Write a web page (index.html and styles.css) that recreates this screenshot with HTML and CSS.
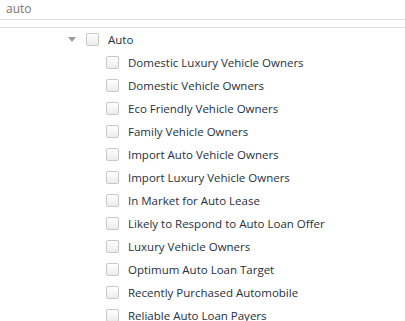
FILE: index.html
```html
<!DOCTYPE html>
<html lang="en">
<head>
    <meta charset="UTF-8" />
    <title>Segments</title>
    <link rel="stylesheet" href="styles.css">
</head>
<body>
<div class="search">
    <span class="query">auto</span>
</div>
<div class="tree">
    <div class="node parent">
        <span class="toggle"></span>
        <span class="check"></span>
        <span class="label">Auto</span>
    </div>
    <ul class="children">
        <li class="node"><span class="check"></span><span class="label">Domestic Luxury Vehicle Owners</span></li>
        <li class="node"><span class="check"></span><span class="label">Domestic Vehicle Owners</span></li>
        <li class="node"><span class="check"></span><span class="label">Eco Friendly Vehicle Owners</span></li>
        <li class="node"><span class="check"></span><span class="label">Family Vehicle Owners</span></li>
        <li class="node"><span class="check"></span><span class="label">Import Auto Vehicle Owners</span></li>
        <li class="node"><span class="check"></span><span class="label">Import Luxury Vehicle Owners</span></li>
        <li class="node"><span class="check"></span><span class="label">In Market for Auto Lease</span></li>
        <li class="node"><span class="check"></span><span class="label">Likely to Respond to Auto Loan Offer</span></li>
        <li class="node"><span class="check"></span><span class="label">Luxury Vehicle Owners</span></li>
        <li class="node"><span class="check"></span><span class="label">Optimum Auto Loan Target</span></li>
        <li class="node"><span class="check"></span><span class="label">Recently Purchased Automobile</span></li>
        <li class="node"><span class="check"></span><span class="label">Reliable Auto Loan Payers</span></li>
    </ul>
</div>
</body>
</html>
```

FILE: styles.css
```css
body {
    margin: 0;
    font-family: "Open Sans", sans-serif;
    font-size: 11.5px;
    color: #26303a;
    background: #fff;
    overflow: hidden;
}
.search {
    height: 20px;
    border-bottom: 1px solid #ddd;
    padding-left: 6px;
    box-sizing: border-box;
}
.query {
    color: #7a756e;
    font-size: 12px;
    line-height: 18px;
}
.tree {
    margin-top: 7px;
    border-top: 1px solid #ddd;
}
.node {
    display: flex;
    align-items: center;
    height: 23px;
}
.parent {
    padding-left: 68px;
}
.toggle {
    width: 0;
    height: 0;
    border-left: 4px solid transparent;
    border-right: 4px solid transparent;
    border-top: 5px solid #999;
    margin-right: 10px;
}
.check {
    width: 11px;
    height: 11px;
    border: 1px solid #c8c8c8;
    border-radius: 2px;
    background: linear-gradient(#fff, #ececec);
    margin-right: 9px;
}
.children {
    list-style: none;
    margin: 0;
    padding: 0 0 0 106px;
}
```
